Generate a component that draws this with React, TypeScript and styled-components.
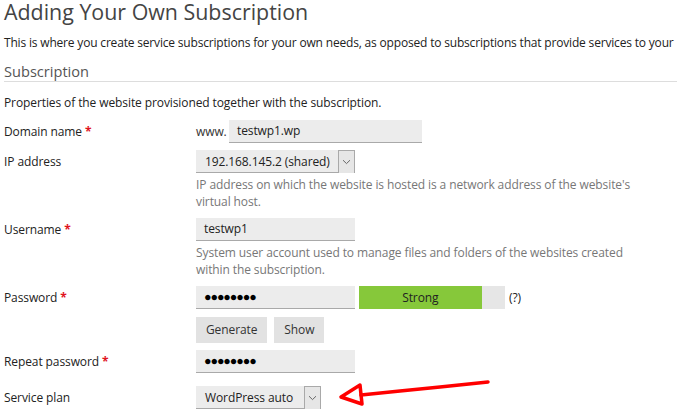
import React from "react";
import styled, { createGlobalStyle } from "styled-components";

const Global = createGlobalStyle`
  html, body { margin: 0; padding: 0; background: #fff; overflow: hidden; }
  body { font-family: "Open Sans", "Noto Sans", sans-serif; color: #222; letter-spacing: -0.1px; }
`;

const Page = styled.div`
  position: relative;
  width: 677px;
  height: 417px;
  padding: 0 0 0 4px;
  box-sizing: border-box;
  overflow: hidden;
`;

const Title = styled.h1`
  margin: 0;
  font-size: 21.4px;
  font-weight: 400;
  line-height: 24px;
  color: #444;
  white-space: nowrap;
  letter-spacing: 0;
`;

const Lead = styled.p`
  margin: 10px 0 0;
  font-size: 12px;
  line-height: 17px;
  white-space: nowrap;
  letter-spacing: -0.18px;
`;

const SectionHead = styled.h2`
  margin: 11px 0 0;
  font-size: 14.6px;
  font-weight: 400;
  line-height: 19px;
  color: #555;
  border-bottom: 1px solid #ddd;
  letter-spacing: 0;
`;

const Intro = styled.p`
  margin: 12px 0 0;
  font-size: 12px;
  line-height: 17px;
`;

const Form = styled.div`
  margin-top: 9px;
  display: flex;
  flex-direction: column;
`;

const Row = styled.div<{ $gap: number }>`
  display: grid;
  grid-template-columns: 192px 1fr;
  padding-bottom: ${(p) => p.$gap}px;
`;

const Label = styled.div`
  font-size: 12px;
  line-height: 23px;
  white-space: nowrap;
`;

const Req = styled.span`
  color: #e0141e;
  font-weight: 700;
`;

const Field = styled.div`
  display: flex;
  flex-direction: column;
  align-items: flex-start;
`;

const Inline = styled.div<{ $gap?: number }>`
  display: flex;
  align-items: center;
  gap: ${(p) => p.$gap ?? 4}px;
`;

const Prefix = styled.span`
  font-size: 12px;
  line-height: 23px;
  color: #333;
  width: 33px;
`;

const TextBox = styled.div<{ $w: number }>`
  box-sizing: border-box;
  width: ${(p) => p.$w}px;
  height: 23px;
  background: #ececec;
  border-bottom: 1px solid #a9a9a9;
  padding: 0 8px;
  font-size: 12px;
  line-height: 22px;
  color: #222;
  white-space: nowrap;
`;

const Dots = styled.span`
  font-size: 12.5px;
  letter-spacing: -1.1px;
  color: #000;
  font-weight: 700;
`;

const Select = styled.div<{ $w: number }>`
  box-sizing: border-box;
  width: ${(p) => p.$w}px;
  height: 23px;
  display: flex;
  background: #ececec;
  border-bottom: 1px solid #a9a9a9;
`;

const SelectText = styled.div`
  flex: 1;
  padding-left: 9px;
  font-size: 12px;
  line-height: 23px;
  color: #222;
  white-space: nowrap;
`;

const DropBtn = styled.div`
  box-sizing: border-box;
  width: 17px;
  height: 23px;
  border: 1px solid #a9a9a9;
  border-bottom: none;
  background: #e6e6e6;
  display: flex;
  align-items: center;
  justify-content: center;
`;

const Help = styled.div`
  font-size: 12px;
  line-height: 17px;
  color: #777;
  padding-top: 3px;
  width: 460px;
`;

const Meter = styled.div`
  display: flex;
  width: 146px;
  height: 23px;
  background: #e6e6e6;
`;

const MeterFill = styled.div`
  display: flex;
  align-items: center;
  justify-content: center;
  height: 100%;
  background: #86c83a;
  font-size: 12px;
  color: #222;
`;

const Hint = styled.span`
  font-size: 12px;
  color: #222;
`;

const Button = styled.div`
  box-sizing: border-box;
  height: 26px;
  padding: 0 10px;
  background: #e2e2e2;
  font-size: 12px;
  line-height: 26px;
  color: #333;
`;

const Annotation = styled.svg`
  position: absolute;
  left: 330px;
  top: 370px;
`;

const Chevron = () => (
  <svg width="9" height="6" viewBox="0 0 9 6">
    <path d="M1 1.2 L4.5 4.6 L8 1.2" fill="none" stroke="#666" strokeWidth="1" />
  </svg>
);

export default function App() {
  return (
    <Page>
      <Global />
      <Title>Adding Your Own Subscription</Title>
      <Lead>
        This is where you create service subscriptions for your own needs, as opposed to subscriptions that
        provide services to your
      </Lead>
      <SectionHead>Subscription</SectionHead>
      <Intro>Properties of the website provisioned together with the subscription.</Intro>
      <Form>
        <Row $gap={7}>
          <Label>
            Domain name <Req>*</Req>
          </Label>
          <Field>
            <Inline $gap={0}>
              <Prefix>www.</Prefix>
              <TextBox $w={193}>testwp1.wp</TextBox>
            </Inline>
          </Field>
        </Row>
        <Row $gap={8}>
          <Label>IP address</Label>
          <Field>
            <Select $w={159}>
              <SelectText>192.168.145.2 (shared)</SelectText>
              <DropBtn>
                <Chevron />
              </DropBtn>
            </Select>
            <Help>
              IP address on which the website is hosted is a network address of the website's
              <br />
              virtual host.
            </Help>
          </Field>
        </Row>
        <Row $gap={8}>
          <Label>
            Username <Req>*</Req>
          </Label>
          <Field>
            <TextBox $w={159}>testwp1</TextBox>
            <Help>
              System user account used to manage files and folders of the websites created
              <br />
              within the subscription.
            </Help>
          </Field>
        </Row>
        <Row $gap={8}>
          <Label>
            Password <Req>*</Req>
          </Label>
          <Field>
            <Inline $gap={4}>
              <TextBox $w={159}>
                <Dots>●●●●●●●●</Dots>
              </TextBox>
              <Meter>
                <MeterFill style={{ width: "84%" }}>Strong</MeterFill>
              </Meter>
              <Hint>(?)</Hint>
            </Inline>
          </Field>
        </Row>
        <Row $gap={7}>
          <Label />
          <Field>
            <Inline $gap={7}>
              <Button>Generate</Button>
              <Button>Show</Button>
            </Inline>
          </Field>
        </Row>
        <Row $gap={13}>
          <Label>
            Repeat password <Req>*</Req>
          </Label>
          <Field>
            <TextBox $w={159}>
              <Dots>●●●●●●●●</Dots>
            </TextBox>
          </Field>
        </Row>
        <Row $gap={0}>
          <Label>Service plan</Label>
          <Field>
            <Select $w={125}>
              <SelectText>WordPress auto</SelectText>
              <DropBtn>
                <Chevron />
              </DropBtn>
            </Select>
          </Field>
        </Row>
      </Form>
      <Annotation width="170" height="45" viewBox="0 0 170 45">
        <path
          d="M158 12 L110 17 L70 21 L31 25"
          fill="none"
          stroke="#ff0000"
          strokeWidth="3.5"
          strokeLinecap="round"
        />
        <path
          d="M30 15 L11 27 L32 34 Z"
          fill="none"
          stroke="#ff0000"
          strokeWidth="3.5"
          strokeLinejoin="round"
        />
      </Annotation>
    </Page>
  );
}
